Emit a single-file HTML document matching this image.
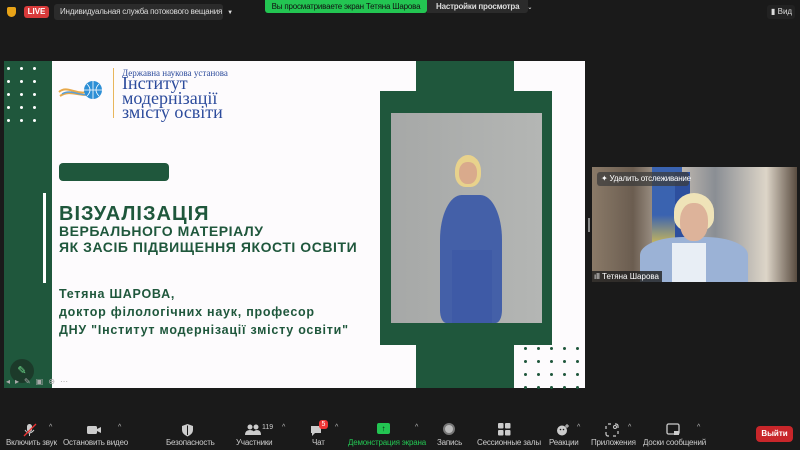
<!DOCTYPE html>
<html><head><meta charset="utf-8"><style>
*{margin:0;padding:0;box-sizing:border-box}
body{width:800px;height:450px;background:#1a1a1a;position:relative;overflow:hidden;font-family:"Liberation Sans","DejaVu Sans",sans-serif;color:#ddd}
.a{position:absolute;white-space:nowrap}
.g{background:#1f573c}
.dot{position:absolute;width:3px;height:3px;border-radius:50%}
.tb{position:absolute;top:438px;font-size:8px;color:#ccc;white-space:nowrap;letter-spacing:-.2px}
.ic{position:absolute;top:423px}
.car{position:absolute;top:424px;font-size:7px;color:#bbb}
</style></head><body>
<!-- top bar -->
<div class="a" style="left:7px;top:7px;width:9px;height:10px;background:#e8a317;border-radius:2px 2px 5px 5px"></div>
<div class="a" style="left:24px;top:6px;width:25px;height:12px;background:#d83a3a;border-radius:3px;color:#fff;font-size:8px;font-weight:bold;text-align:center;line-height:12px">LIVE</div>
<div class="a" style="left:54px;top:4px;width:169px;height:16px;background:#2b2b2b;border-radius:3px;font-size:8px;line-height:16px;padding-left:6px;color:#ddd;letter-spacing:-.2px">Индивидуальная служба потокового вещания <span style="font-size:6px;margin-left:3px">▼</span></div>
<div class="a" style="left:265px;top:0;width:162px;height:13px;background:#23c552;border-radius:0 0 3px 3px;font-size:8px;line-height:13px;color:#111;text-align:center;letter-spacing:-.2px">Вы просматриваете экран Тетяна Шарова</div>
<div class="a" style="left:427px;top:0;width:101px;height:13px;background:#2b2b2b;border-radius:0 0 3px 0;font-size:8px;line-height:13px;color:#ddd;padding-left:9px;font-weight:bold;letter-spacing:-.2px">Настройки просмотра <span style="font-size:6px;margin-left:6px">⌄</span></div>
<div class="a" style="left:767px;top:5px;width:28px;height:14px;background:#222;border-radius:3px;font-size:8px;line-height:14px;color:#ddd;padding-left:4px">▮ Вид</div>

<!-- slide -->
<div class="a" style="left:4px;top:61px;width:581px;height:327px;background:#fdfbfd"></div>
<div class="a g" style="left:4px;top:61px;width:48px;height:327px"></div>
<div class="a" style="left:43px;top:193px;width:3px;height:90px;background:#fff"></div>
<div id="dl"></div>
<div class="a g" style="left:380px;top:91px;width:172px;height:254px"></div>
<div class="a g" style="left:416px;top:61px;width:98px;height:40px"></div>
<div class="a g" style="left:416px;top:340px;width:98px;height:48px"></div>
<div class="a" style="left:391px;top:113px;width:151px;height:210px;background:linear-gradient(90deg,#a6a8a7,#b4b6b4)"></div>
<!-- person -->
<div class="a" style="left:455px;top:155px;width:26px;height:32px;background:#e8d28c;border-radius:50% 50% 40% 40%"></div>
<div class="a" style="left:459px;top:162px;width:18px;height:22px;background:#d9aa8c;border-radius:45%"></div>
<div class="a" style="left:440px;top:195px;width:62px;height:128px;background:#4460a8;border-radius:35% 35% 10% 10%"></div>
<div class="a" style="left:452px;top:250px;width:40px;height:73px;background:#3e5aa6"></div>

<!-- logo -->
<svg class="a" style="left:58px;top:78px" width="56" height="24" viewBox="0 0 56 24"><path d="M1 14 C10 6 20 20 34 12 M2 18 C14 10 24 22 40 14" stroke="#e8a94a" stroke-width="2" fill="none"/><path d="M4 16 C14 10 22 20 38 16" stroke="#5a9fd6" stroke-width="1.5" fill="none"/><circle cx="35" cy="12" r="9" fill="#2d8fd6"/><path d="M26 12h18M35 3v18M29 6q6 6 0 12M41 6q-6 6 0 12" stroke="#fff" stroke-width=".8" fill="none"/></svg>
<div class="a" style="left:113px;top:68px;width:1px;height:50px;background:#e8b65c"></div>
<div class="a" style="left:122px;top:68px;font-family:'Liberation Serif',serif;color:#2c4b9c;font-size:9px">Державна наукова установа</div>
<div class="a" style="left:122px;top:76px;font-family:'Liberation Serif',serif;color:#2c4b9c;font-size:18px;line-height:14.5px">Інститут<br>модернізації<br>змісту освіти</div>

<div class="a g" style="left:59px;top:163px;width:110px;height:18px;border-radius:4px"></div>
<div class="a" style="left:59px;top:203px;color:#1f573c;font-weight:bold;font-size:20px;line-height:22px;letter-spacing:1px">ВІЗУАЛІЗАЦІЯ</div>
<div class="a" style="left:59px;top:223px;color:#1f573c;font-weight:bold;font-size:14px;line-height:16px;letter-spacing:.55px">ВЕРБАЛЬНОГО МАТЕРІАЛУ<br>ЯК ЗАСІБ ПІДВИЩЕННЯ ЯКОСТІ ОСВІТИ</div>
<div class="a" style="left:59px;top:285px;color:#1f573c;font-weight:bold;font-size:12.5px;line-height:18px;letter-spacing:.75px">Тетяна ШАРОВА,<br>доктор філологічних наук, професор<br>ДНУ "Інститут модернізації змісту освіти"</div>

<div class="a" style="left:10px;top:359px;width:24px;height:24px;border-radius:50%;background:#1c3a2a;color:#6fdc8c;font-size:11px;text-align:center;line-height:24px">✎</div>
<div class="a" style="left:6px;top:377px;font-size:8px;color:#aaa;letter-spacing:5px">◂▸✎▣⊕⋯</div>

<!-- video tile -->
<div class="a" style="left:588px;top:218px;width:2px;height:14px;background:#888"></div>
<div class="a" style="left:592px;top:167px;width:205px;height:115px;background:linear-gradient(90deg,#8a7a68 0%,#6b5d50 20%,#c9c0b5 40%,#8a8e94 60%,#ddd5c8 85%,#5a4c40 100%)"></div>
<div class="a" style="left:652px;top:167px;width:30px;height:80px;background:linear-gradient(#3a63b0,#3a63b0 60%,#d8c050)"></div>
<div class="a" style="left:675px;top:172px;width:15px;height:70px;background:#2d4f9e"></div>
<div class="a" style="left:640px;top:237px;width:108px;height:45px;background:#9bb2d6;border-radius:40% 40% 0 0"></div>
<div class="a" style="left:672px;top:243px;width:34px;height:39px;background:#e8eef5"></div>
<div class="a" style="left:674px;top:193px;width:40px;height:38px;background:#efe3b8;border-radius:50% 50% 35% 35%"></div>
<div class="a" style="left:680px;top:203px;width:28px;height:38px;background:#ddb39a;border-radius:45%"></div>
<div class="a" style="left:597px;top:172px;width:92px;height:14px;background:rgba(60,60,60,.75);border-radius:3px;font-size:8px;line-height:14px;color:#fff;padding-left:4px;letter-spacing:-.2px">✦ Удалить отслеживание</div>
<div class="a" style="left:592px;top:271px;width:70px;height:11px;background:rgba(30,30,30,.8);font-size:8px;line-height:11px;color:#fff;padding-left:2px">ıll Тетяна Шарова</div>

<!-- toolbar -->
<svg class="ic" style="left:23px" width="14" height="14"><rect x="4" y="1" width="5" height="8" rx="2.5" fill="#ccc"/><path d="M2 7q4 6 9 0M6.5 10v3" stroke="#ccc" fill="none"/><path d="M1 13L13 1" stroke="#e33" stroke-width="1.3"/></svg>
<div class="car" style="left:49px">^</div>
<svg class="ic" style="left:86px" width="16" height="14"><rect x="1" y="3" width="10" height="8" rx="1.5" fill="#ccc"/><path d="M11 6l4-2v6l-4-2z" fill="#ccc"/></svg>
<div class="car" style="left:118px">^</div>
<svg class="ic" style="left:181px" width="13" height="14"><path d="M6.5 1L12 3v4q0 4-5.5 6.5Q1 11 1 7V3z" fill="#ccc"/><path d="M6.5 2.5v9.5" stroke="#1a1a1a"/></svg>
<svg class="ic" style="left:245px" width="16" height="14"><circle cx="5" cy="4" r="2.5" fill="#ccc"/><circle cx="11" cy="4" r="2.5" fill="#ccc"/><path d="M0 12q0-5 5-5t5 5zM8 12q0-5 4-5t4 5z" fill="#ccc"/></svg>
<div class="a" style="left:262px;top:424px;font-size:7px;color:#ccc">119</div>
<div class="car" style="left:282px">^</div>
<svg class="ic" style="left:310px" width="14" height="14"><path d="M1 3h10v7H5l-3 3v-3H1z" fill="#ccc"/></svg>
<div class="a" style="left:319px;top:420px;width:9px;height:9px;background:#e33;border-radius:3px;font-size:7px;color:#fff;text-align:center;line-height:9px">5</div>
<div class="car" style="left:335px">^</div>
<div class="a" style="left:377px;top:423px;width:13px;height:11px;background:#23c552;border-radius:2px;color:#111;font-size:8px;text-align:center;line-height:11px">↑</div>
<div class="car" style="left:415px">^</div>
<div class="a" style="left:443px;top:423px;width:12px;height:12px;border-radius:50%;background:#bbb;border:2px solid #777"></div>
<svg class="ic" style="left:498px" width="13" height="13"><rect x="0" y="0" width="5.5" height="5.5" rx="1" fill="#ccc"/><rect x="7" y="0" width="5.5" height="5.5" rx="1" fill="#ccc"/><rect x="0" y="7" width="5.5" height="5.5" rx="1" fill="#ccc"/><rect x="7" y="7" width="5.5" height="5.5" rx="1" fill="#ccc"/></svg>
<svg class="ic" style="left:556px" width="14" height="14"><circle cx="6" cy="7.5" r="5" fill="#ccc"/><circle cx="4.5" cy="6.5" r=".8" fill="#1a1a1a"/><circle cx="7.5" cy="6.5" r=".8" fill="#1a1a1a"/><path d="M11 1v4M9 3h4" stroke="#ccc"/></svg>
<div class="car" style="left:577px">^</div>
<svg class="ic" style="left:605px" width="14" height="14"><path d="M3 1h3M1 3v3M13 8v3M8 13h3M1 9v2a2 2 0 0 0 2 2h1M13 5V3a2 2 0 0 0-2-2h-1" stroke="#ccc" fill="none" stroke-width="1.2"/><circle cx="10" cy="4" r="1.5" fill="none" stroke="#ccc"/></svg>
<div class="car" style="left:628px">^</div>
<svg class="ic" style="left:666px" width="14" height="14"><rect x="1" y="1" width="12" height="10" rx="1.5" fill="none" stroke="#ccc" stroke-width="1.3"/><rect x="8" y="8" width="5" height="4" fill="#ccc"/></svg>
<div class="car" style="left:697px">^</div>

<div class="tb" style="left:6px">Включить звук</div>
<div class="tb" style="left:63px">Остановить видео</div>
<div class="tb" style="left:166px">Безопасность</div>
<div class="tb" style="left:236px">Участники</div>
<div class="tb" style="left:312px">Чат</div>
<div class="tb" style="left:348px;color:#23c552">Демонстрация экрана</div>
<div class="tb" style="left:437px">Запись</div>
<div class="tb" style="left:477px">Сессионные залы</div>
<div class="tb" style="left:549px">Реакции</div>
<div class="tb" style="left:591px">Приложения</div>
<div class="tb" style="left:643px">Доски сообщений</div>
<div class="a" style="left:756px;top:426px;width:37px;height:16px;background:#c8262a;border-radius:4px;color:#fff;font-size:8px;font-weight:bold;text-align:center;line-height:16px">Выйти</div>

<script>
var h='';
function dots(x0,y0,nx,ny,dx,dy,c){for(var i=0;i<nx;i++)for(var j=0;j<ny;j++)h+='<div class="dot" style="left:'+(x0+i*dx)+'px;top:'+(y0+j*dy)+'px;background:'+c+'"></div>';}
dots(7,67,3,5,13,13,'#fff');
dots(524,347,5,4,13,13,'#1f573c');
document.getElementById('dl').outerHTML=h;
</script>
</body></html>
